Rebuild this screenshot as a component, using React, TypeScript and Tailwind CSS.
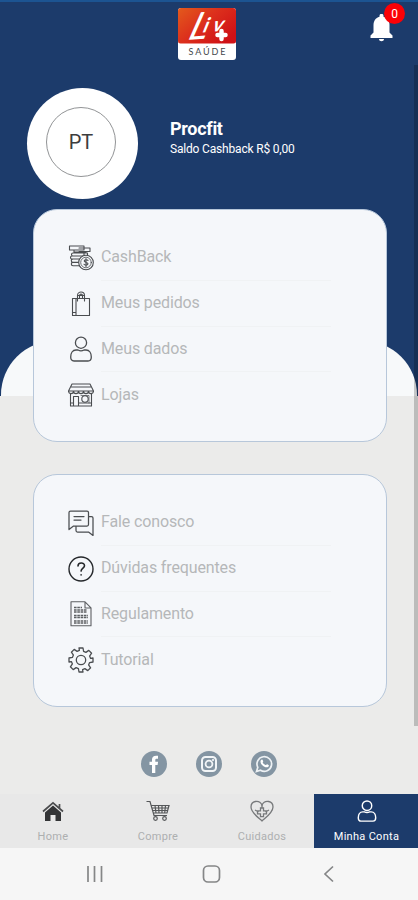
import type { ReactNode } from 'react';

const FONT = "font-[Roboto,'Liberation_Sans',sans-serif]";

function Logo() {
  return (
    <svg width="58" height="52" viewBox="0 0 58 52" className="mr-[4px] overflow-visible font-[Lato,sans-serif]">
      <defs>
        <linearGradient id="logoRed" x1="0" y1="0" x2="1" y2="0.7">
          <stop offset="0" stopColor="#e35a1c" />
          <stop offset="0.5" stopColor="#dc2f1c" />
          <stop offset="1" stopColor="#cf1116" />
        </linearGradient>
      </defs>
      <rect width="58" height="52" rx="3" fill="#fff" />
      <path d="M3 0H55a3 3 0 0 1 3 3V33a2.500 2.500 0 0 1-2.500 2.500H2.500A2.500 2.500 0 0 1 0 33V3a3 3 0 0 1 3-3Z" fill="url(#logoRed)" />
      <g fill="#fff">
        <text transform="translate(7.500 32) rotate(-4) skewX(-28)" fontSize="37" textLength="19" lengthAdjust="spacingAndGlyphs">L</text>
        <text transform="translate(23.500 24.500) rotate(-4) skewX(-26)" fontSize="20" fontWeight="700" textLength="20" lengthAdjust="spacing">iv</text>
      </g>
      <path d="M43.500 23v8M39.500 27h8" stroke="#fff" strokeWidth="4.500" strokeLinecap="round" />
      <text x="10.500" y="47" fontSize="9" fill="#44484c" textLength="37">SAÚDE</text>
    </svg>
  );
}

function Line({ children, size = 26, w = 1.3, className = 'text-[#4a4d50]' }: { children: ReactNode; size?: number; w?: number; className?: string }) {
  return (
    <svg width={size} height={size} viewBox="0 0 26 26" fill="none" stroke="currentColor" strokeWidth={w} strokeLinecap="round" strokeLinejoin="round" className={`shrink-0 ${className}`}>
      {children}
    </svg>
  );
}

const CashIcon = () => (
  <Line w={1.1}>
    <path d="M1.500 1h14.500v4H1.500ZM11 3h11v3.500H11M6 5v2h12M5 8h11v3H5a1.500 1.500 0 0 1 0-3ZM12 11H4a1.500 1.500 0 0 0 0 3h8M12 14H5a1.700 1.700 0 0 0 0 3.400h7M12 17.400H5a1.600 1.600 0 0 0 0 3.400h8M16 8h3.500v2.500" />
    <circle cx="18" cy="17.500" r="7.300" fill="#f5f7fa" />
    <circle cx="18" cy="17.500" r="5.300" strokeWidth=".8" />
    <path d="M20 15.500c-.6-1.200-3.800-1-3.800.6 0 1.700 3.800 1 3.800 2.700 0 1.600-3.200 1.800-4 .5M18 13.600v7.800" />
  </Line>
);
const BagIcon = () => (
  <Line w={1.1}>
    <path d="M4.500 7.500h17V24.500h-17ZM8 7.500v17M4.500 21.500H8M9.500 10V4.500C9.500 2 11.500 1 13 1s3.500 1 3.500 3.500V10M11.500 7.500V5c0-2.500 3-2.500 3 0v2.500M9.500 4.500h7" />
  </Line>
);
const UserIcon = ({ size = 26, w = 1.3, className = 'text-[#4a4d50]' }: { size?: number; w?: number; className?: string }) => (
  <Line size={size} w={w} className={className}>
    <circle cx="13" cy="6.700" r="5.600" />
    <path d="M8 14h2c2 1.100 4 1.100 6 0h2c3.500 0 5.300 3.500 5.300 7 0 2.500-1.100 4-3.300 4H6c-2.200 0-3.300-1.500-3.300-4 0-3.500 1.800-7 5.300-7Z" />
  </Line>
);
const StoreIcon = () => (
  <Line w={1.1}>
    <path d="M4 2h18l3.500 7H.5ZM3.500 5h19M.5 9c0 3.500 5 3.500 5 0 0 3.500 5 3.500 5 0 0 3.500 5 3.500 5 0 0 3.500 5 3.500 5 0 0 3.500 5 3.500 5 0M2.500 12v12h21V12M5.500 24V14.500h5V24M2.500 21h3M10.500 21h13" />
    <circle cx="17" cy="17" r="3.200" />
    <path d="M13 13.500h8V21" strokeWidth=".7" />
  </Line>
);
const ChatIcon = () => (
  <Line w={1.25}>
    <path d="M2.500 1h16.500q1.500 0 1.500 1.500v12q0 1.500-1.500 1.500H5.500L1 19.500V2.500Q1 1 2.500 1ZM20.500 6.500h3Q25 6.500 25 8v17.500L20.500 22H9.500Q8 22 8 20.500v-4M6 6.500h10M6 10h7" />
  </Line>
);
const HelpIcon = () => (
  <Line w={1.4} className="text-[#25282b]">
    <circle cx="13" cy="13" r="12" />
    <path d="M10 10c0-4 6.500-4 6.500-.3 0 2.300-3.400 2.500-3.400 5.400M13.100 18.800v.2" strokeWidth="1.600" />
  </Line>
);
const DocIcon = () => (
  <Line w={1.1} className="text-[#5d6063]">
    <path d="M3 .8h14l6 6v18H3ZM17 1v6h6" />
    <path d="M6 6.500h8M6 9h13M6 11h13M6 14.500h14M6 16.500h14M6 20h14M6 22h14" strokeWidth="1.400" strokeDasharray="2.600 .7" strokeLinecap="butt" />
  </Line>
);
const GearIcon = () => (
  <Line w={1.3}>
    <path d="M11 1h4l.6 3.400 2.300 1 2.900-2 2.800 2.800-2 2.900 1 2.300L25 11v4l-3.400.6-1 2.300 2 2.900-2.800 2.800-2.900-2-2.300 1L15 25h-4l-.6-3.400-2.300-1-2.900 2-2.800-2.800 2-2.900-1-2.300L1 15v-4l3.400-.6 1-2.300-2-2.900 2.800-2.800 2.900 2 2.300-1Z" />
    <circle cx="13" cy="13" r="4.700" />
  </Line>
);

function Row({ icon, label, last }: { icon: ReactNode; label: string; last?: boolean }) {
  return (
    <div className="flex h-[45.800px] items-center">
      {icon}
      <div className={`ml-[7px] flex h-full w-[230px] items-center border-b text-[16px] tracking-[-.13px] text-[#b5b7b9] ${last ? 'border-transparent' : 'border-[#f0f2f4]'}`}>
        {label}
      </div>
    </div>
  );
}

function Card({ children, className }: { children: ReactNode; className: string }) {
  return (
    <section className={`ml-[33px] h-[233px] w-[354px] rounded-[24px] border border-[#b7c7da] bg-[#f5f7fa] pl-[34px] pt-[25px] ${className}`}>
      {children}
    </section>
  );
}

function Social({ children }: { children: ReactNode }) {
  return (
    <svg width="26" height="26" viewBox="0 0 26 26" fill="none">
      <circle cx="13" cy="13" r="13" fill="#8495a3" />
      {children}
    </svg>
  );
}

function Tab({ icon, label, active }: { icon: ReactNode; label: string; active?: boolean }) {
  return (
    <div className={`flex flex-col items-center pt-[6px] text-[11px] leading-[14px] tracking-[.3px] ${active ? 'bg-[#1c3b6b] pl-px text-white' : 'text-[#adafb0]'}`}>
      <div className="flex h-[22px] items-center">{icon}</div>
      <span className="mt-[8px]">{label}</span>
    </div>
  );
}

export default function App() {
  return (
    <div className={`relative isolate flex h-[900px] w-[418px] flex-col overflow-hidden bg-[#ebebea] ${FONT}`}>
      <div className="absolute inset-x-0 top-0 -z-10 flex h-[396px] flex-col justify-end border-t-2 border-[#1c5492] bg-[#1c3b6b]">
        <div className="mx-px h-[55px] rounded-t-[54px] bg-[#f7f9fa]" />
      </div>
      <div className="absolute right-0 top-[65px] h-[661px] w-[4px] bg-black/20" />

      <header className="relative flex h-[72px] justify-center pt-[8px]">
        <Logo />
        <svg width="23" height="28" viewBox="0 0 23 28" fill="#fff" className="absolute left-[370px] top-[14px]">
          <path d="M9.500 2.700V1.800a2 2 0 0 1 4 0v.9c4 1 6 4.300 6 8.300v7.500l3 3V24H.5v-2.500l3-3V11c0-4 2-7.300 6-8.300ZM9 25h5c0 3-5 3-5 0Z" />
        </svg>
        <span className="absolute left-[384px] top-[3px] flex size-[21px] items-center justify-center rounded-full bg-[#fb0106] text-[12px] text-white">0</span>
      </header>

      <div className="flex h-[137px] pl-[27px] pt-[16px]">
        <div className="flex size-[111px] shrink-0 items-center justify-center rounded-full bg-white">
          <div className="mb-[3px] mr-[3px] flex size-[70px] items-center justify-center rounded-full border border-[#929496] text-[20px] text-[#3d3d3d]">PT</div>
        </div>
        <div className="ml-[32px] pt-[30px] text-white">
          <h1 className="text-[18px] font-bold leading-[22px] tracking-[-.3px]">Procfit</h1>
          <p className="mt-px text-[12px] leading-[16px] tracking-[-.18px]">Saldo Cashback R$ 0,00</p>
        </div>
      </div>

      <Card className="">
        <Row icon={<CashIcon />} label="CashBack" />
        <Row icon={<BagIcon />} label="Meus pedidos" />
        <Row icon={<UserIcon />} label="Meus dados" />
        <Row icon={<StoreIcon />} label="Lojas" last />
      </Card>
      <Card className="mt-[32px]">
        <Row icon={<ChatIcon />} label="Fale conosco" />
        <Row icon={<HelpIcon />} label="Dúvidas frequentes" />
        <Row icon={<DocIcon />} label="Regulamento" />
        <Row icon={<GearIcon />} label="Tutorial" last />
      </Card>

      <div className="flex h-[87px] justify-center gap-[29px] pt-[44px]">
        <Social>
          <path d="M11 22v-8H8.500v-3.300H11V8.500c0-3 2-4.300 6-3.700v3c-2-.2-2.700 0-2.700 1.400v1.500h2.800l-.5 3.300h-2.300v8Z" fill="#fff" />
        </Social>
        <Social>
          <rect x="6" y="6" width="14" height="14" rx="3.500" stroke="#f2f5f7" strokeWidth="2" />
          <circle cx="13" cy="13" r="3.400" stroke="#f2f5f7" strokeWidth="1.800" />
          <circle cx="17" cy="9" r="1" fill="#fff" />
        </Social>
        <Social>
          <path d="m5.500 20.500 1.300-4.200a7.300 7.300 0 1 1 2.700 2.900Z" stroke="#edf1f4" strokeWidth="1.700" />
          <path d="M10 9c1-1.200 1.600-.6 2.200 1.200.2.700-.8 1-.4 1.600.7 1 1.400 1.800 2.700 2.300.7.200 1-.9 1.500-.8 1.700.7 2.400 1.100 1.500 2.200-3 3.200-10-3.300-7.500-6.500Z" fill="#fff" />
        </Social>
      </div>

      <nav className="grid h-[54px] grid-cols-[106px_104px_104px_104px] bg-[#e8e8e8]">
        <Tab
          label="Home"
          icon={
            <svg width="22" height="21" viewBox="0 0 22 21" fill="#333436">
              <path d="M11 4.500 3 11.500V20h5.500v-6h5v6H19v-8.500Z" />
              <path d="M1 10.500 11 1.800l10 8.700M17.500 7V3" fill="none" stroke="#4b4c4e" strokeWidth="1.700" />
            </svg>
          }
        />
        <Tab
          label="Compre"
          icon={
            <svg width="24" height="22" viewBox="0 0 24 22" fill="none" stroke="#555759" strokeWidth="1.200">
              <path d="M.5 1.500H4l4 14h13M5 5.500h18l-2 7.500H7.300M5.600 8h16.600M6.500 10.500h15M9 5.500l1 7.500M12.500 5.500l.5 7.500M16 5.500v7.500M19.500 5.500 18.700 13" />
              <circle cx="9.500" cy="18.500" r="1.800" />
              <circle cx="18.500" cy="18.500" r="1.800" />
            </svg>
          }
        />
        <Tab
          label="Cuidados"
          icon={
            <svg width="24" height="22" viewBox="0 0 24 22" fill="none" stroke="#77797b" strokeWidth="1.300">
              <path d="M12 21C7.500 17 1 12.500 1 7c0-6 8-8 11-2 3-6 11-4 11 2 0 5.500-6.500 10-11 14Z" />
              <path d="M10.500 8h3v2.800h3v3h-3v2.800h-3v-2.800h-3v-3h3ZM12 5v3M5 10l3.500 2M19 10l-3.500 2" />
            </svg>
          }
        />
        <Tab active label="Minha Conta" icon={<UserIcon size={22} w={1.7} className="text-white" />} />
      </nav>

      <footer className="flex h-[52px] items-center bg-[#f6f6f6]">
        <svg width="418" height="24" viewBox="0 0 418 24" fill="none" stroke="#858687" strokeWidth="1.700">
          <path d="M88 4v16M94.500 4v16M101.500 4v16M333 4.500 325 12l8 7.500" />
          <rect x="203.500" y="4" width="16" height="16" rx="4.500" />
        </svg>
      </footer>
    </div>
  );
}
